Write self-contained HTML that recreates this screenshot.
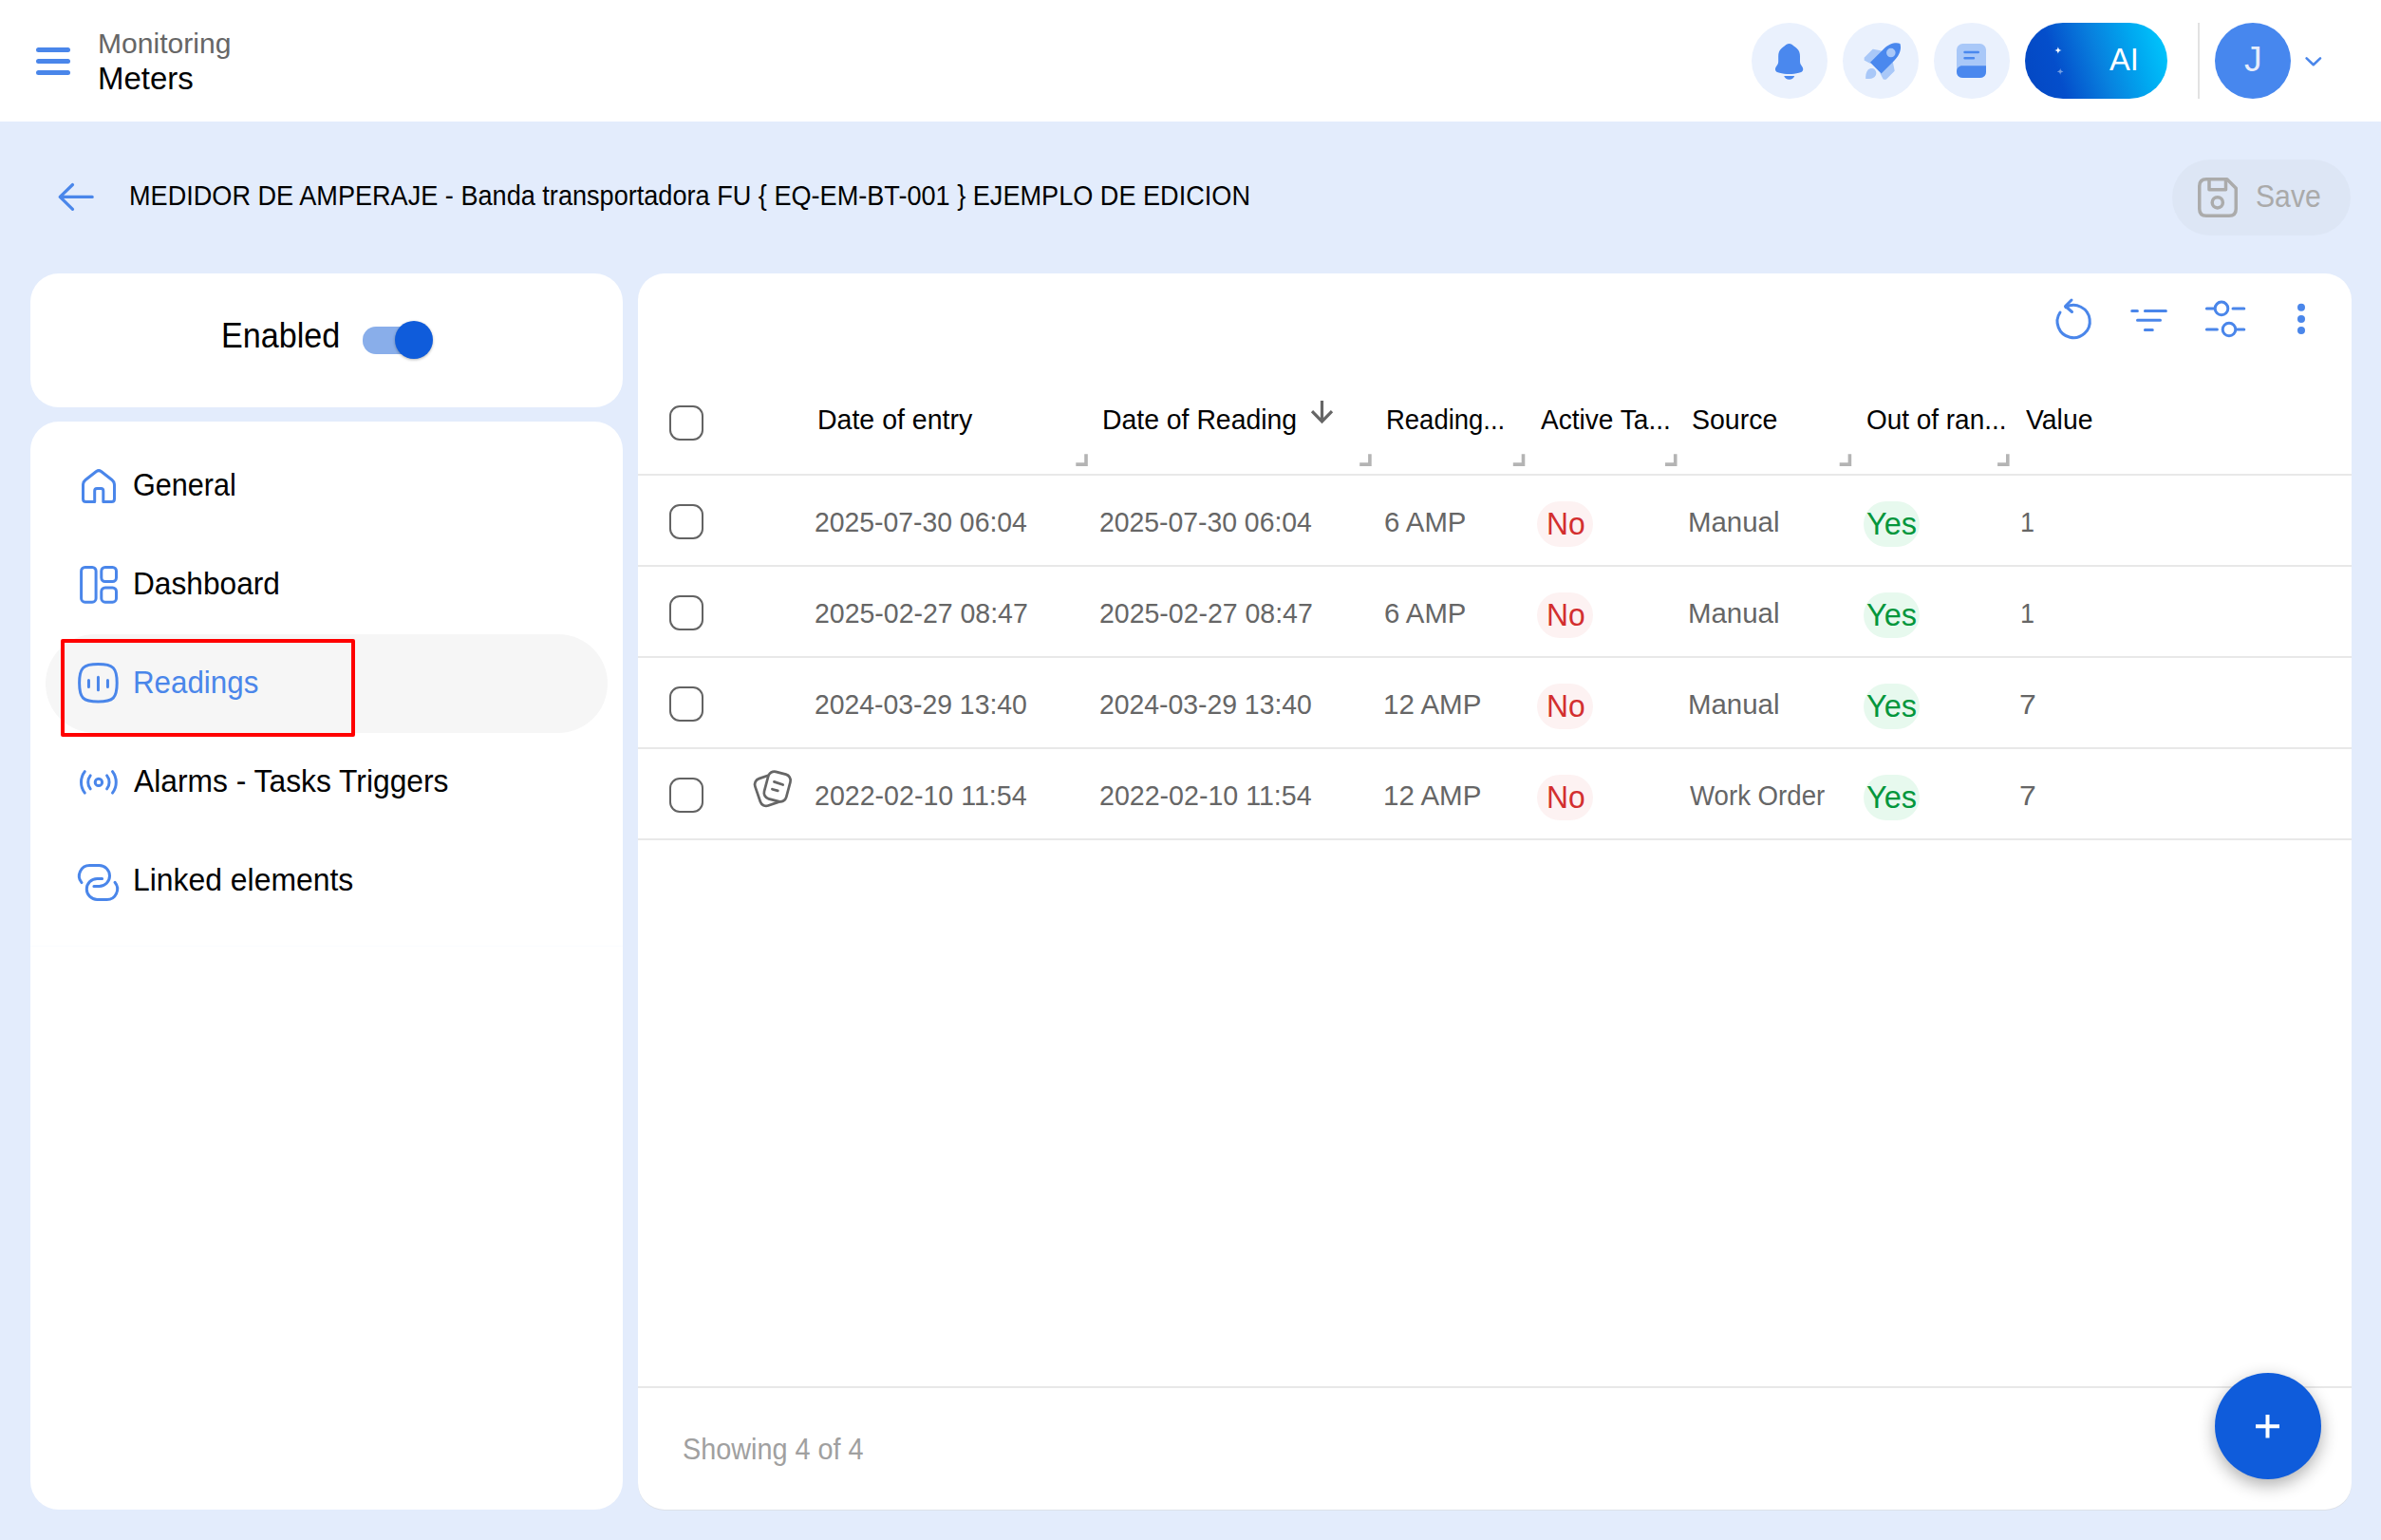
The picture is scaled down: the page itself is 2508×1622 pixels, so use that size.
<!DOCTYPE html>
<html><head><meta charset="utf-8">
<style>
*{margin:0;padding:0;box-sizing:border-box}
html,body{width:2508px;height:1622px;overflow:hidden;background:#e3ecfc;font-family:"Liberation Sans",sans-serif}
.a{position:absolute}
.t{position:absolute;white-space:nowrap;line-height:1}
#hdr{left:0;top:0;width:2508px;height:128px;background:#fff}
.bar{position:absolute;left:38px;width:36px;height:4.6px;border-radius:3px;background:#4a86ea}
.circ{position:absolute;top:24px;width:80px;height:80px;border-radius:50%;background:#eaf1fd}
.card{position:absolute;background:#fff;border-radius:30px}
.navt{font-size:32px;color:#000}
.hd{font-size:28px;color:#000}
.cell{font-size:28.4px;color:#666}
.cb{position:absolute;left:705px;width:36px;height:37px;border:2.1px solid #636363;border-radius:11px}
.rh{position:absolute;top:478px;width:13px;height:13px;border-right:3.5px solid #b4b4b4;border-bottom:3.5px solid #b4b4b4}
.div{position:absolute;left:672px;width:1805px;height:2px;background:#e8e8e8}
.chip{position:absolute;width:59px;height:48px;border-radius:24px}
.no{background:#fdf2f2}
.yes{background:#e7f9ee}
.chipt{font-size:31px}
</style></head>
<body>
<div id="hdr" class="a">
  <div class="bar" style="top:50px"></div>
  <div class="bar" style="top:62px"></div>
  <div class="bar" style="top:74px"></div>
</div>

<div class="circ" style="left:1845px"></div>
<div class="circ" style="left:1941px"></div>
<div class="circ" style="left:2037px"></div>
<div class="a" style="left:2133px;top:24px;width:150px;height:80px;border-radius:40px;background:linear-gradient(72deg,#0447c2 0%,#044ecb 25%,#0880de 52%,#00a8f0 76%,#00ccff 100%)"></div>
<div class="a" style="left:2315px;top:24px;width:2px;height:80px;background:#e2e2e2"></div>
<div class="circ" style="left:2333px;background:#4787ee"></div>

<!-- title -->
<div class="a" style="left:2288px;top:168px;width:188px;height:80px;border-radius:40px;background:#dde6f5"></div>

<!-- left cards -->
<div class="card" style="left:32px;top:288px;width:624px;height:141px"></div>
<div class="a" style="left:382px;top:344px;width:68px;height:28.5px;border-radius:14px;background:#89aeea"></div>
<div class="a" style="left:416px;top:337.6px;width:40px;height:40px;border-radius:50%;background:#0f5cdb;box-shadow:0 1px 3px rgba(0,0,0,.3)"></div>

<div class="card" style="left:32px;top:444px;width:624px;height:1146px"></div>
<div class="a" style="left:47.5px;top:668px;width:592.5px;height:104px;border-radius:52px;background:#f6f6f6"></div>
<div class="a" style="left:64px;top:672.5px;width:310px;height:103px;border:4.2px solid #ff0000;border-radius:2px"></div>

<div class="a" style="left:32px;top:996px;width:624px;height:1px;background:#fafcff"></div>
<!-- right card -->
<div class="card" style="left:672px;top:288px;width:1805px;height:1302px;border-radius:28px;box-shadow:0 1px 0 #dde1e8"></div>

<div class="cb" style="top:427px"></div>
<div class="div" style="top:499px"></div>

<div class="div" style="top:595px"></div>
<div class="div" style="top:691px"></div>
<div class="div" style="top:787px"></div>
<div class="div" style="top:883px"></div>
<div class="div" style="top:1460px"></div>

<div class="cb" style="top:531px"></div>
<div class="cb" style="top:627px"></div>
<div class="cb" style="top:723px"></div>
<div class="cb" style="top:819px"></div>

<div class="chip no" style="left:1619px;top:528px"></div>
<div class="chip yes" style="left:1963px;top:528px"></div>
<div class="chip no" style="left:1619px;top:624px"></div>
<div class="chip yes" style="left:1963px;top:624px"></div>
<div class="chip no" style="left:1619px;top:720px"></div>
<div class="chip yes" style="left:1963px;top:720px"></div>
<div class="chip no" style="left:1619px;top:816px"></div>
<div class="chip yes" style="left:1963px;top:816px"></div>

<div class="a" style="left:2333px;top:1446px;width:112px;height:112px;border-radius:50%;background:#0f5cdb;box-shadow:0 6px 18px rgba(0,0,0,.32)"></div>
<div class="t" style="left:103.00px;top:30.53px;font-size:30.09px;color:#666;">Monitoring</div>
<div class="t" style="left:103.00px;top:66.17px;font-size:32.99px;color:#000;">Meters</div>
<div class="t" style="left:2222.00px;top:46.92px;font-size:32.7px;color:#fff;">AI</div>
<div class="t" style="left:2364.00px;top:44.08px;font-size:37.35px;color:#e6edfb;">J</div>
<div class="t" style="left:136.17px;top:191.10px;font-size:29.65px;color:#000;transform:scaleX(0.9145);transform-origin:0 0;">MEDIDOR DE AMPERAJE - Banda transportadora FU { EQ-EM-BT-001 } EJEMPLO DE EDICION</div>
<div class="t" style="left:2376.07px;top:190.96px;font-size:32.41px;color:#aaa;transform:scaleX(0.9306);transform-origin:0 0;">Save</div>
<div class="t" style="left:233.17px;top:335.57px;font-size:36.19px;color:#000;transform:scaleX(0.9437);transform-origin:0 0;">Enabled</div>
<div class="t" style="left:140.28px;top:494.10px;font-size:33.43px;color:#000;transform:scaleX(0.9155);transform-origin:0 0;">General</div>
<div class="t" style="left:140.20px;top:598.10px;font-size:33.43px;color:#000;transform:scaleX(0.9475);transform-origin:0 0;">Dashboard</div>
<div class="t" style="left:140.03px;top:702.10px;font-size:33.43px;color:#4a86ea;transform:scaleX(0.9370);transform-origin:0 0;">Readings</div>
<div class="t" style="left:140.80px;top:806.10px;font-size:33.43px;color:#000;transform:scaleX(0.9511);transform-origin:0 0;">Alarms - Tasks Triggers</div>
<div class="t" style="left:139.99px;top:910.10px;font-size:33.43px;color:#000;transform:scaleX(0.9544);transform-origin:0 0;">Linked elements</div>
<div class="t" style="left:860.95px;top:428.17px;font-size:29.22px;color:#000;transform:scaleX(0.9759);transform-origin:0 0;">Date of entry</div>
<div class="t" style="left:1160.66px;top:428.17px;font-size:29.22px;color:#000;transform:scaleX(0.9712);transform-origin:0 0;">Date of Reading</div>
<div class="t" style="left:1460.42px;top:428.17px;font-size:29.22px;color:#000;transform:scaleX(0.9403);transform-origin:0 0;">Reading...</div>
<div class="t" style="left:1622.90px;top:428.17px;font-size:29.22px;color:#000;transform:scaleX(0.9614);transform-origin:0 0;">Active Ta...</div>
<div class="t" style="left:1781.82px;top:428.17px;font-size:29.22px;color:#000;transform:scaleX(0.9758);transform-origin:0 0;">Source</div>
<div class="t" style="left:1966.34px;top:428.17px;font-size:29.22px;color:#000;transform:scaleX(0.9556);transform-origin:0 0;">Out of ran...</div>
<div class="t" style="left:2133.60px;top:428.17px;font-size:29.22px;color:#000;transform:scaleX(0.9708);transform-origin:0 0;">Value</div>
<div class="t" style="left:857.75px;top:534.76px;font-size:29.94px;color:#666;transform:scaleX(0.9468);transform-origin:0 0;">2025-07-30 06:04</div>
<div class="t" style="left:1157.75px;top:534.76px;font-size:29.94px;color:#666;transform:scaleX(0.9468);transform-origin:0 0;">2025-07-30 06:04</div>
<div class="t" style="left:1457.52px;top:534.76px;font-size:29.94px;color:#666;transform:scaleX(0.9802);transform-origin:0 0;">6 AMP</div>
<div class="t" style="left:1778.04px;top:534.76px;font-size:29.94px;color:#666;transform:scaleX(0.9821);transform-origin:0 0;">Manual</div>
<div class="t" style="left:2127.60px;top:534.76px;font-size:29.94px;color:#666;transform:scaleX(0.9000);transform-origin:0 0;">1</div>
<div class="t" style="left:1628.78px;top:534.55px;font-size:33.14px;color:#d32f2f;transform:scaleX(0.9615);transform-origin:0 0;">No</div>
<div class="t" style="left:1966.02px;top:534.55px;font-size:33.14px;color:#03963c;transform:scaleX(0.9808);transform-origin:0 0;">Yes</div>
<div class="t" style="left:857.75px;top:630.76px;font-size:29.94px;color:#666;transform:scaleX(0.9509);transform-origin:0 0;">2025-02-27 08:47</div>
<div class="t" style="left:1157.75px;top:630.76px;font-size:29.94px;color:#666;transform:scaleX(0.9509);transform-origin:0 0;">2025-02-27 08:47</div>
<div class="t" style="left:1457.52px;top:630.76px;font-size:29.94px;color:#666;transform:scaleX(0.9802);transform-origin:0 0;">6 AMP</div>
<div class="t" style="left:1778.04px;top:630.76px;font-size:29.94px;color:#666;transform:scaleX(0.9821);transform-origin:0 0;">Manual</div>
<div class="t" style="left:2127.60px;top:630.76px;font-size:29.94px;color:#666;transform:scaleX(0.9000);transform-origin:0 0;">1</div>
<div class="t" style="left:1628.78px;top:630.55px;font-size:33.14px;color:#d32f2f;transform:scaleX(0.9615);transform-origin:0 0;">No</div>
<div class="t" style="left:1966.02px;top:630.55px;font-size:33.14px;color:#03963c;transform:scaleX(0.9808);transform-origin:0 0;">Yes</div>
<div class="t" style="left:857.75px;top:726.76px;font-size:29.94px;color:#666;transform:scaleX(0.9468);transform-origin:0 0;">2024-03-29 13:40</div>
<div class="t" style="left:1157.75px;top:726.76px;font-size:29.94px;color:#666;transform:scaleX(0.9468);transform-origin:0 0;">2024-03-29 13:40</div>
<div class="t" style="left:1456.53px;top:726.76px;font-size:29.94px;color:#666;transform:scaleX(0.9863);transform-origin:0 0;">12 AMP</div>
<div class="t" style="left:1778.04px;top:726.76px;font-size:29.94px;color:#666;transform:scaleX(0.9821);transform-origin:0 0;">Manual</div>
<div class="t" style="left:2126.93px;top:726.76px;font-size:29.94px;color:#666;transform:scaleX(1.0667);transform-origin:0 0;">7</div>
<div class="t" style="left:1628.78px;top:726.55px;font-size:33.14px;color:#d32f2f;transform:scaleX(0.9615);transform-origin:0 0;">No</div>
<div class="t" style="left:1966.02px;top:726.55px;font-size:33.14px;color:#03963c;transform:scaleX(0.9808);transform-origin:0 0;">Yes</div>
<div class="t" style="left:857.75px;top:822.76px;font-size:29.94px;color:#666;transform:scaleX(0.9549);transform-origin:0 0;">2022-02-10 11:54</div>
<div class="t" style="left:1157.75px;top:822.76px;font-size:29.94px;color:#666;transform:scaleX(0.9549);transform-origin:0 0;">2022-02-10 11:54</div>
<div class="t" style="left:1456.53px;top:822.76px;font-size:29.94px;color:#666;transform:scaleX(0.9863);transform-origin:0 0;">12 AMP</div>
<div class="t" style="left:1780.00px;top:822.76px;font-size:29.94px;color:#666;transform:scaleX(0.9227);transform-origin:0 0;">Work Order</div>
<div class="t" style="left:2126.93px;top:822.76px;font-size:29.94px;color:#666;transform:scaleX(1.0667);transform-origin:0 0;">7</div>
<div class="t" style="left:1628.78px;top:822.55px;font-size:33.14px;color:#d32f2f;transform:scaleX(0.9615);transform-origin:0 0;">No</div>
<div class="t" style="left:1966.02px;top:822.55px;font-size:33.14px;color:#03963c;transform:scaleX(0.9808);transform-origin:0 0;">Yes</div>
<div class="t" style="left:719.07px;top:1511.59px;font-size:30.96px;color:#a0a0a0;transform:scaleX(0.9310);transform-origin:0 0;">Showing 4 of 4</div>
<svg class="a" style="left:0;top:0" width="2508" height="1622" viewBox="0 0 2508 1622">
<g fill="#4a88ee">
<path d="M1884.6,46 C1882.5,46 1881,47 1880,48.3 C1879,49.2 1877.5,50 1876.5,51 C1874,53 1873.2,56 1873.2,59.5 L1873.2,64.5 C1873.2,66.5 1872.5,68 1871.5,69.3 C1870.3,71 1869.8,72.2 1870,73.5 C1870.3,75.5 1872,76.3 1874.5,76.8 C1877.5,77.6 1881,78.1 1884.6,78.1 C1888.2,78.1 1891.7,77.6 1894.7,76.8 C1897.2,76.3 1898.9,75.5 1899.2,73.5 C1899.4,72.2 1898.9,71 1897.7,69.3 C1896.7,68 1896,66.5 1896,64.5 L1896,59.5 C1896,56 1895.2,53 1892.7,51 C1891.7,50 1890.2,49.2 1889.2,48.3 C1888.2,47 1886.7,46 1884.6,46 Z"/>
<path d="M1879.2,80 L1890.2,80 C1889.5,82.3 1887.3,83.8 1884.7,83.8 C1882.1,83.8 1879.9,82.3 1879.2,80 Z"/>
</g>
<path fill="#a9c8f8" d="M1965.2,83 C1965,80 1965.5,76 1967.5,73.8 C1969.5,71.6 1973,71.5 1975,73.5 C1977,75.5 1976.8,79 1974.6,81 C1972.4,83 1968,83.3 1965.2,83 Z"/>
<g transform="translate(1983.2,64.2) rotate(45)">
<path fill="#a9c8f8" stroke="#a9c8f8" stroke-width="1.6" stroke-linejoin="round" d="M-8,-6 L-15.5,-1 L-15.5,11 L-14,12.5 L-8,10.5 Z"/>
<path fill="#a9c8f8" stroke="#a9c8f8" stroke-width="1.6" stroke-linejoin="round" d="M8,-6 L15.5,-1 L15.5,11 L14,12.5 L8,10.5 Z"/>
<path fill="#4a88ee" d="M-8.2,10.5 L-8.2,-9 C-8.2,-18 -4.5,-23.5 0,-25.8 C4.5,-23.5 8.2,-18 8.2,-9 L8.2,10.5 Z"/>
<circle fill="#a9c8f8" cx="0" cy="-12.2" r="4.8"/>
</g>
<rect x="2061" y="46" width="31" height="36" rx="6.5" fill="#a9c8f8"/>
<path fill="#4a88ee" d="M2061,75 C2061,71.8 2063.6,69.2 2066.8,69.2 L2092,69.2 L2092,75.5 Q2092,82 2085.5,82 L2067.5,82 Q2061,82 2061,75.5 Z"/>
<g stroke="#4a88ee" stroke-width="2.4" stroke-linecap="round">
<path d="M2069.5,55 L2083.8,55 M2069.5,61.3 L2079,61.3"/>
</g>
<path fill="#fff" d="M2167.9,49.199999999999996 C2168.714,52.086 2168.714,52.086 2171.6,52.9 C2168.714,53.714 2168.714,53.714 2167.9,56.6 C2167.0860000000002,53.714 2167.0860000000002,53.714 2164.2000000000003,52.9 C2167.0860000000002,52.086 2167.0860000000002,52.086 2167.9,49.199999999999996 Z"/>
<path fill="#fff" fill-opacity="0.45" d="M2170.2,72.10000000000001 C2170.926,74.674 2170.926,74.674 2173.5,75.4 C2170.926,76.126 2170.926,76.126 2170.2,78.7 C2169.4739999999997,76.126 2169.4739999999997,76.126 2166.8999999999996,75.4 C2169.4739999999997,74.674 2169.4739999999997,74.674 2170.2,72.10000000000001 Z"/>
<path d="M2429.6,61.4 L2436.8,68.2 L2444,61.4" fill="none" stroke="#4a86ea" stroke-width="2.6" stroke-linecap="round" stroke-linejoin="round"/>
<path d="M97.2,207.4 L63.2,207.4 M76.5,194.5 L63.2,207.4 L76.5,220.3" fill="none" stroke="#4a86ea" stroke-width="3.2" stroke-linecap="round" stroke-linejoin="round"/>
<g fill="none" stroke="#ababab" stroke-width="3.5" stroke-linejoin="round">
<path d="M2324,188.75 L2345.8,188.75 L2355.25,198.2 L2355.25,220 Q2355.25,227.25 2348,227.25 L2324,227.25 Q2316.75,227.25 2316.75,220 L2316.75,196 Q2316.75,188.75 2324,188.75 Z"/>
<path d="M2327,188.75 L2327,199.8 L2344.5,199.8 L2344.5,188.75"/>
<circle cx="2335.8" cy="213.3" r="5.6"/>
</g>
<g fill="none" stroke="#4a86ea" stroke-width="3" stroke-linecap="round" stroke-linejoin="round">
<path d="M99.7,528.5 L90.5,528.5 Q87.5,528.5 87.5,525.5 L87.5,511 Q87.5,507.5 90,505.5 L101.5,496.5 Q104,494.8 106.5,496.5 L118,505.5 Q120.5,507.5 120.5,511 L120.5,525.5 Q120.5,528.5 117.5,528.5 L108.8,528.5 L108.8,517 Q108.8,514.6 106.4,514.6 L102.1,514.6 Q99.7,514.6 99.7,517 Z"/>
<rect x="85.6" y="597.5" width="15.5" height="36.7" rx="4"/>
<rect x="106.8" y="597.5" width="15.7" height="15" rx="4"/>
<rect x="106.8" y="619" width="15.7" height="15.2" rx="4"/>
<path d="M103.4,699.5 C119.3,699.5 123.2,703.4 123.2,719.3 C123.2,735.2 119.3,739.1 103.4,739.1 C87.5,739.1 83.6,735.2 83.6,719.3 C83.6,703.4 87.5,699.5 103.4,699.5 Z"/>
<path d="M103.45,713.3 L103.45,726.7 M93.45,716.6 L93.45,723.4 M113.45,716.6 L113.45,723.4"/>
<circle cx="103.9" cy="823.9" r="3.7"/>
<path d="M89.3,812.7 A18.45,18.45 0 0 0 89.3,835.1 M118.5,812.7 A18.45,18.45 0 0 1 118.5,835.1 M95.2,816.9 A11.2,11.2 0 0 0 95.2,830.9 M112.6,816.9 A11.2,11.2 0 0 1 112.6,830.9"/>
<path d="M86,929.6 A11,11 0 0 1 94.5,911.5 L104.5,911.5 A11,11 0 0 1 104.5,933.5 L98.9,933.5"/>
<path d="M107.6,925.4 L102.3,925.4 A11,11 0 0 0 102.3,947.4 L112.6,947.4 A11,11 0 0 0 121,929.3"/>
<path d="M2175.9,323.6 A17.1,17.1 0 1 1 2170,329"/>
<path d="M2182,316 L2175.5,322.5 L2182.5,328.5"/>
<path d="M2245.7,327.4 L2251.4,327.4 M2259.4,327.4 L2281.4,327.4 M2251.5,337.3 L2275.5,337.3 M2259.4,347.4 L2267.3,347.4"/>
<path d="M2324.4,325 L2332,325 M2352,325 L2363.8,325 M2324.4,347 L2335.4,347 M2356.5,347 L2363.8,347"/>
<circle cx="2340" cy="324.9" r="6.8"/>
<circle cx="2348" cy="347" r="6.8"/>
</g>
<g fill="#4a86ea">
<circle cx="2424" cy="323.8" r="4"/><circle cx="2424" cy="336" r="4"/><circle cx="2424" cy="347.9" r="4"/>
</g>
<path d="M1133.3,489.1 L1145.8,489.1 M1144.0,478.3 L1144.0,491 M1432.2,489.1 L1444.7,489.1 M1442.9,478.3 L1442.9,491 M1593.8,489.1 L1606.3,489.1 M1604.5,478.3 L1604.5,491 M1754.0,489.1 L1766.5,489.1 M1764.7,478.3 L1764.7,491 M1937.7,489.1 L1950.2,489.1 M1948.4,478.3 L1948.4,491 M2104.1,489.1 L2116.6,489.1 M2114.8,478.3 L2114.8,491" fill="none" stroke="#b4b4b4" stroke-width="3.6"/>
<path d="M1392.5,422 L1392.5,443 M1382,433.2 L1392.5,443.9 L1403,433.2" fill="none" stroke="#666" stroke-width="3.2"/>
<g fill="none" stroke="#666" stroke-width="2.7" stroke-linecap="round" stroke-linejoin="round">
<rect x="797.5" y="817.5" width="24" height="30" rx="6.5" transform="rotate(-19 809.5 832.5)"/>
<rect x="806.75" y="813.75" width="24" height="29.5" rx="6.5" fill="#fff" transform="rotate(15 818.75 828.5)"/>
<path d="M815.4,823.4 L824.7,826.5 M813.4,831.2 L819.3,832.9"/>
</g>
<path d="M2376,1502.2 L2401,1502.2 M2388.5,1490 L2388.5,1514.4" stroke="#fff" stroke-width="4"/>
</svg>
</body></html>
